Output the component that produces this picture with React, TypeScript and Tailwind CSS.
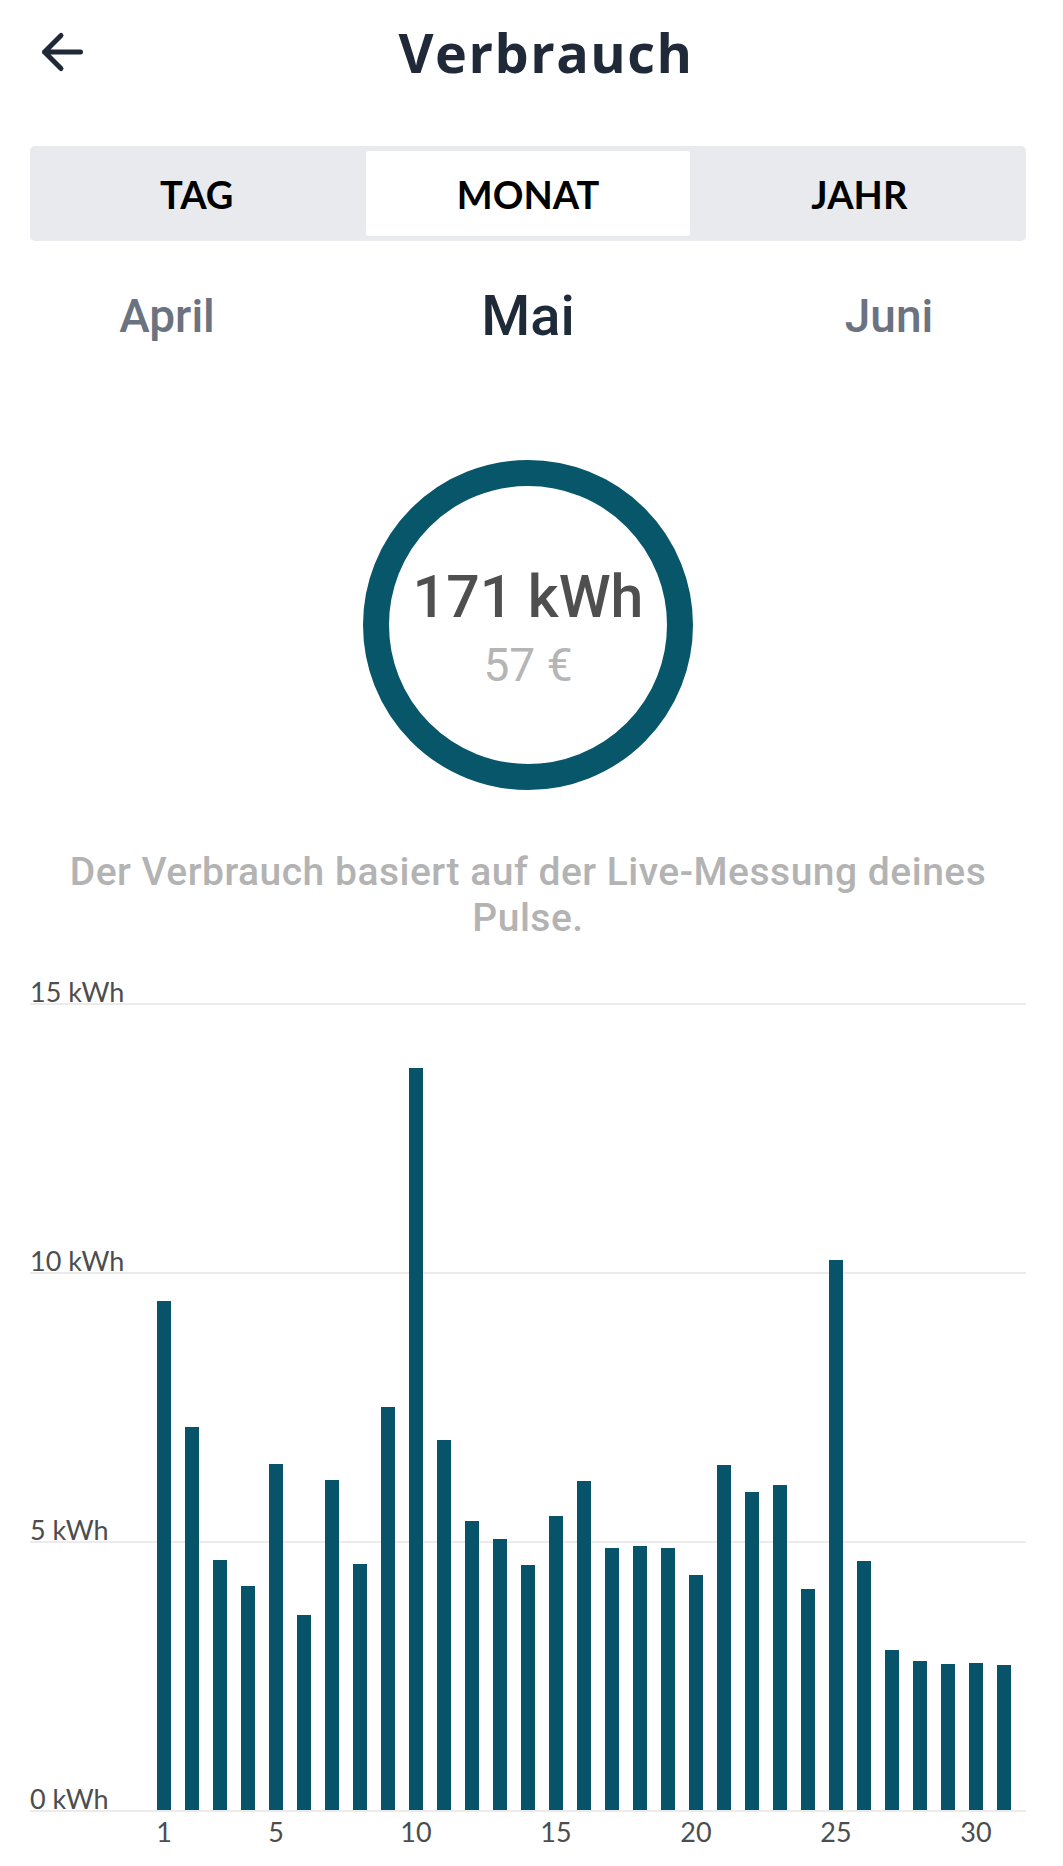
import React from "react";

const days = [
  9.46, 7.12, 4.65, 4.16, 6.43, 3.63, 6.14, 4.58, 7.5, 13.79,
  6.87, 5.37, 5.04, 4.56, 5.47, 6.12, 4.87, 4.91, 4.87, 4.36,
  6.42, 5.91, 6.05, 4.11, 10.22, 4.63, 2.97, 2.77, 2.72, 2.73, 2.69,
];

const shownDays = [1, 5, 10, 15, 20, 25, 30];
const pxPerKwh = 269 / 5;

const lato = "font-['Lato','Liberation_Sans',sans-serif]";
const roboto = "font-['Roboto','Liberation_Sans',sans-serif]";

function BackArrow() {
  return (
    <svg viewBox="0 0 48 48" className="h-[48px] w-[48px]" fill="none">
      <path
        d="M42.5 24H6.5M23 7.5L6.5 24L23 40.5"
        stroke="#1f2937"
        strokeWidth={5}
        strokeLinecap="round"
        strokeLinejoin="round"
      />
    </svg>
  );
}

function PeriodTabs() {
  const tabs = ["TAG", "MONAT", "JAHR"];
  return (
    <div className="mt-[42px] grid h-[95px] grid-cols-3 gap-[8px] rounded-[5px] bg-[#e9eaee] p-[5px]">
      {tabs.map((tab) => (
        <button
          key={tab}
          className={`flex items-center justify-center rounded-[3px] text-[38px] font-bold leading-none text-black ${lato} ${
            tab === "MONAT" ? "bg-white" : ""
          }`}
        >
          {tab}
        </button>
      ))}
    </div>
  );
}

function MonthSwitcher() {
  return (
    <div className={`-mx-[30px] grid h-[150px] grid-cols-3 items-center ${roboto}`}>
      <span className="pr-[18px] text-center text-[46px] font-medium leading-none text-[#6b7280]">April</span>
      <span className="text-center text-[56px] font-medium leading-none text-[#1e2a38]">Mai</span>
      <span className="pl-[18px] text-center text-[46px] font-medium leading-none text-[#6b7280]">Juni</span>
    </div>
  );
}

function TotalRing() {
  return (
    <div className="mx-auto mt-[69px] flex h-[330px] w-[330px] flex-col items-center justify-center rounded-full border-[26px] border-[#07566a] pt-[5px]">
      <p className={`text-[59px] font-medium leading-none text-[#4f4f4f] ${roboto}`}>171 kWh</p>
      <p className={`mt-[16px] text-[46px] leading-none text-[#b5b5b5] ${roboto}`}>57 €</p>
    </div>
  );
}

function DailyChart() {
  const rows = ["15 kWh", "10 kWh", "5 kWh", "0 kWh"];
  return (
    <div className={`mt-[40px] ${lato}`}>
      <div className="relative">
        {rows.map((label, i) => (
          <div
            key={label}
            className={`flex items-end border-b-2 border-[#ebebeb] ${i === 0 ? "h-[24px]" : "h-[269px]"}`}
          >
            <span className="text-[27px] leading-[22px] text-[#4d4d4d]">{label}</span>
          </div>
        ))}

        <div className="absolute bottom-[2px] left-[120px] flex items-end">
          {days.map((kwh, i) => (
            <div key={i} className="flex w-[28px] justify-center">
              <div className="w-[14px] bg-[#07546a]" style={{ height: kwh * pxPerKwh }} />
            </div>
          ))}
        </div>
      </div>

      <div className="mt-[6px] flex pl-[120px]">
        {days.map((_, i) => (
          <div key={i} className="flex w-[28px] justify-center">
            {shownDays.includes(i + 1) && (
              <span className="whitespace-nowrap text-[27px] leading-none text-[#4d4d4d]">{i + 1}</span>
            )}
          </div>
        ))}
      </div>
    </div>
  );
}

export default function App() {
  return (
    <div className="h-[1866px] w-[1063px] overflow-hidden bg-white">
      <header className="flex h-[104px] items-center pl-[30px] pr-[61px]">
        <button className="flex h-[60px] w-[60px] items-center pl-[8px]">
          <BackArrow />
        </button>
        <h1
          className={`flex-1 text-center text-[54px] font-bold leading-none tracking-[1.5px] text-[#1f2937] font-['Open_Sans','Liberation_Sans',sans-serif]`}
        >
          Verbrauch
        </h1>
      </header>

      <main className="pl-[30px] pr-[37px]">
        <PeriodTabs />
        <MonthSwitcher />
        <TotalRing />

        <p
          className={`mt-[59px] px-[15px] text-center text-[39px] font-medium leading-[46px] tracking-[0.5px] text-[#b3b3b3] ${roboto}`}
        >
          Der Verbrauch basiert auf der Live-Messung deines Pulse.
        </p>

        <DailyChart />
      </main>
    </div>
  );
}
